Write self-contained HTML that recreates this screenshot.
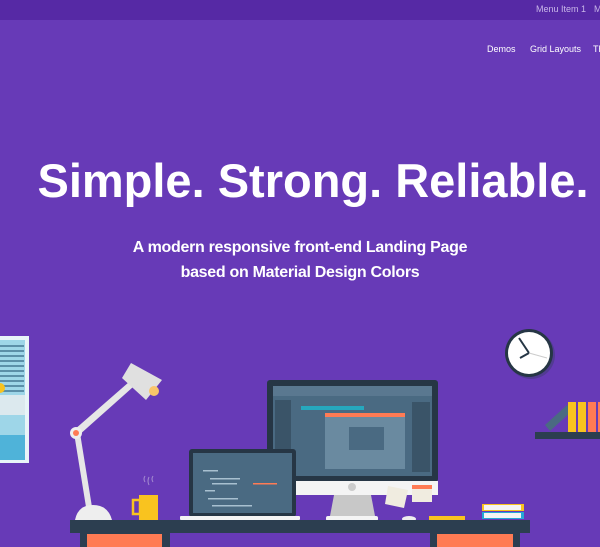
<!DOCTYPE html>
<html><head><meta charset="utf-8"><style>
html,body{margin:0;padding:0}
body{width:600px;height:547px;overflow:hidden;background:#673ab7;position:relative;font-family:"Liberation Sans",sans-serif}
.top{position:absolute;left:0;top:0;width:600px;height:20px;background:#5629a5}
.top span{position:absolute;top:4px;font-size:9px;color:#c8b6e8}
.nav{position:absolute;top:44px;font-size:9px;color:#fff}
h1{position:absolute;left:0;top:153px;width:626px;margin:0;text-align:center;color:#fff;font-size:47px;font-weight:bold;letter-spacing:0px;white-space:nowrap}
.sub{position:absolute;left:0;width:600px;text-align:center;color:#fff;font-size:16px;font-weight:bold;letter-spacing:-0.3px}
svg{position:absolute;left:0;top:0}
</style></head><body>
<div class="top"><span style="left:536px">Menu Item 1</span><span style="left:594px">M</span></div>
<div class="nav" style="left:487px">Demos</div>
<div class="nav" style="left:530px">Grid Layouts</div>
<div class="nav" style="left:593px">Th</div>
<h1>Simple. Strong. Reliable.</h1>
<div class="sub" style="top:239px">A modern responsive front-end Landing Page</div>
<div class="sub" style="top:264px">based on Material Design Colors</div>
<svg width="600" height="547" viewBox="0 0 600 547">
<!-- picture -->
<rect x="-2" y="336" width="31" height="127" fill="#e8f4f8"/>
<rect x="0" y="340" width="25" height="120" fill="#9ed6e8"/>
<g fill="#5b8fa8"><rect x="0" y="345" width="24" height="2"/><rect x="0" y="350" width="24" height="2"/><rect x="0" y="355" width="24" height="2"/><rect x="0" y="360" width="24" height="2"/><rect x="0" y="365" width="24" height="2"/><rect x="0" y="370" width="24" height="2"/><rect x="0" y="375" width="24" height="2"/><rect x="0" y="380" width="24" height="2"/><rect x="0" y="385" width="24" height="2"/><rect x="0" y="390" width="24" height="2"/></g>
<circle cx="0" cy="388" r="5" fill="#f9c31f"/>
<rect x="0" y="395" width="25" height="20" fill="#dce9ee"/>
<rect x="0" y="435" width="25" height="25" fill="#4fb3d9"/>
<!-- lamp -->
<polygon points="74,433 80,433 92,507 86,507" fill="#e6e6e6"/>
<polygon points="74,430 129,382 133,387 78,436" fill="#e6e6e6"/>
<polygon points="122,378 131,363 162,380 146,400" fill="#e0e0e0"/>
<circle cx="154" cy="391" r="5" fill="#f9c56a"/>
<circle cx="76" cy="433" r="6" fill="#eee"/><circle cx="76" cy="433" r="3" fill="#ff7b54"/>
<path d="M75,520 Q78,505 93,505 Q108,505 112,520 Z" fill="#eee"/>
<!-- mug -->
<rect x="139" y="495" width="19" height="25" fill="#f9c31f"/>
<rect x="133" y="500" width="7" height="14" fill="none" stroke="#f9c31f" stroke-width="2.5"/>
<path d="M145,482 q-2,-3 0,-6 M149,485 q-2,-4 0,-8 M153,482 q-2,-3 0,-6" stroke="#a58bd0" stroke-width="1" fill="none"/>
<!-- monitor -->
<rect x="267" y="380" width="171" height="102" rx="3" fill="#263645"/>
<rect x="273" y="386" width="159" height="90" fill="#4a6a82"/>
<rect x="273" y="386" width="159" height="10" fill="#5a7890"/>
<rect x="275" y="400" width="16" height="58" fill="#3a5468"/>
<rect x="301" y="406" width="63" height="4" fill="#26a8be"/>
<rect x="325" y="413" width="80" height="4" fill="#ff7b54"/>
<rect x="325" y="417" width="80" height="52" fill="#6a8aa0"/>
<rect x="349" y="427" width="35" height="23" fill="#4a6a82"/>
<rect x="412" y="402" width="18" height="70" fill="#3a5468"/>
<rect x="267" y="481" width="171" height="14" fill="#f4f4f4"/>
<circle cx="352" cy="487" r="4" fill="#ccc"/>
<polygon points="334,495 371,495 375,516 330,516" fill="#c8c8c8"/>
<rect x="326" y="516" width="52" height="5" rx="2" fill="#f4f4f4"/>
<!-- notes -->
<polygon points="388,486 408,490 404,508 385,504" fill="#f0ece0"/>
<rect x="412" y="485" width="20" height="17" fill="#f0ece0"/><rect x="412" y="485" width="20" height="4" fill="#ff7b54"/>
<ellipse cx="409" cy="519" rx="7" ry="3" fill="#eee"/>
<rect x="429" y="516" width="36" height="4" fill="#f9c31f"/>
<!-- books -->
<rect x="482" y="504" width="42" height="7" fill="#f9c31f"/><rect x="484" y="505" width="37" height="5" fill="#f4f4f4"/>
<rect x="482" y="512" width="42" height="7" fill="#26a8d6"/><rect x="484" y="513" width="37" height="5" fill="#f4f4f4"/>
<!-- laptop -->
<rect x="189" y="449" width="107" height="68" rx="3" fill="#263645"/>
<rect x="193" y="453" width="99" height="60" fill="#4a6a82"/>
<g fill="#a8c0d0"><rect x="203" y="470" width="15" height="1.5"/><rect x="210" y="478" width="30" height="1.5"/><rect x="212" y="483" width="25" height="1.5"/><rect x="205" y="490" width="10" height="1.5"/><rect x="208" y="498" width="30" height="1.5"/><rect x="212" y="505" width="40" height="1.5"/></g>
<rect x="253" y="483" width="24" height="1.5" fill="#ff7b54"/>
<rect x="180" y="516" width="120" height="4" rx="1" fill="#f4f4f4"/>
<!-- desk -->
<rect x="70" y="520" width="460" height="13" fill="#2c3e50"/>
<rect x="80" y="533" width="90" height="14" fill="#2c3e50"/>
<rect x="87" y="534" width="75" height="13" fill="#ff7b54"/>
<rect x="430" y="533" width="90" height="14" fill="#2c3e50"/>
<rect x="437" y="534" width="76" height="13" fill="#ff7b54"/>
<!-- clock -->
<circle cx="531" cy="355" r="24" fill="#2c3e50" opacity=".35"/>
<circle cx="529" cy="353" r="24" fill="#263645"/>
<circle cx="529" cy="353" r="21" fill="#fff"/>
<path d="M529,353 L519,338 M529,353 L520,358" stroke="#263645" stroke-width="2"/>
<path d="M529,353 L547,358" stroke="#ccc" stroke-width="1"/>
<!-- shelf -->
<rect x="535" y="432" width="65" height="7" fill="#2c3e50"/>
<polygon points="545,425 567,405 572,411 550,431" fill="#4a6a82"/>
<rect x="568" y="402" width="8" height="30" fill="#f9c31f"/>
<rect x="578" y="402" width="8" height="30" fill="#f9c31f"/>
<rect x="588" y="402" width="8" height="30" fill="#ff7b54"/>
<rect x="598" y="402" width="4" height="30" fill="#ff7b54"/>
</svg>
</body></html>
